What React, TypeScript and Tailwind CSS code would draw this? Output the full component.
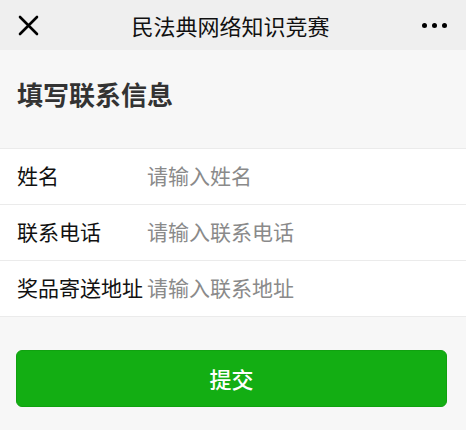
import React from "react";

const font = { fontFamily: '"Noto Sans CJK SC", "Noto Sans", sans-serif' };

const fields = [
  { label: "姓名", placeholder: "请输入姓名" },
  { label: "联系电话", placeholder: "请输入联系电话" },
  { label: "奖品寄送地址", placeholder: "请输入联系地址" },
];

export default function App() {
  return (
    <div className="w-[466px] h-[430px] bg-[#f7f7f7] overflow-hidden" style={font}>
      {/* nav bar */}
      <div className="h-[50px] bg-[#efefef] flex items-center justify-between px-[18px]">
        <svg width="21" height="21" viewBox="0 0 21 21" className="text-black">
          <path d="M2 2L19 19M19 2L2 19" stroke="currentColor" strokeWidth="2.6" strokeLinecap="round" />
        </svg>
        <div className="text-[22px] text-[#111] leading-none">民法典网络知识竞赛</div>
        <div className="flex items-center gap-[5px] pr-[1px]">
          <span className="w-[5px] h-[5px] rounded-full bg-black" />
          <span className="w-[5px] h-[5px] rounded-full bg-black" />
          <span className="w-[5px] h-[5px] rounded-full bg-black" />
        </div>
      </div>

      <div className="px-[17px] pt-[26px] pb-[36px]">
        <h1 className="text-[26px] leading-[36px] font-bold text-[#333]">填写联系信息</h1>
      </div>

      <div className="bg-white border-t border-[#ebebeb]">
        {fields.map((f) => (
          <div key={f.label} className="h-[56px] flex items-center border-b border-[#ebebeb] px-[17px] pb-[2px]">
            <label className="w-[130px] shrink-0 text-[21px] text-[#111] whitespace-nowrap">{f.label}</label>
            <input
              className="flex-1 min-w-0 text-[21px] outline-none bg-transparent placeholder:text-[#8a8a8a]"
              placeholder={f.placeholder}
              style={font}
            />
          </div>
        ))}
      </div>

      <div className="px-[16px] pt-[33px]">
        <button
          className="w-[431px] h-[57px] rounded-[6px] bg-[#13ae13] border border-[#10a210] text-white text-[22px] font-medium"
          style={font}
        >
          提交
        </button>
      </div>
    </div>
  );
}
